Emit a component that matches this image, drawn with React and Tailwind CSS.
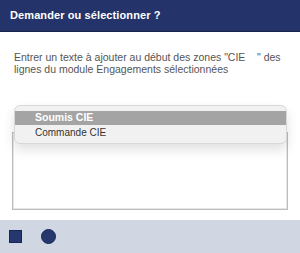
export default function App() {
  return (
    <div className="w-[300px] h-[253px] flex flex-col bg-white overflow-hidden" style={{ fontFamily: '"Liberation Sans", Arial, sans-serif' }}>
      <div className="h-[32px] shrink-0 bg-[#24346a] border-b border-[#18234a] flex items-center px-[10px]">
        <span className="text-white font-bold text-[11px] tracking-[0.1px]">Demander ou sélectionner ?</span>
      </div>
      <div className="flex-1 flex flex-col px-[12px]">
        <p className="mt-[19px] pl-[2px] text-[10.5px] leading-[12px] text-[#555555]">
          Entrer un texte à ajouter au début des zones "CIE&nbsp;&nbsp;&nbsp;&nbsp;" des lignes du module Engagements sélectionnées
        </p>
        <div className="relative mt-[57px]">
          <div className="h-[78px] w-[276px] border border-[#bdbdbd] bg-white shadow-[inset_0_0_0_1px_#e6e6e6]"></div>
          <div className="absolute left-[2px] top-[-27px] w-[273px] rounded-[6px] bg-[#f1f1f1] border border-[#d8d8d8] pt-[5px] pb-[4px] shadow-[0_6px_12px_rgba(0,0,0,0.12)]">
            <div className="h-[14px] bg-[#a4a4a4] flex items-center pl-[20px] text-white text-[10.5px] font-semibold">Soumis CIE</div>
            <div className="h-[14px] flex items-center pl-[20px] text-[#333333] text-[10px]">Commande CIE</div>
          </div>
        </div>
      </div>
      <div className="h-[33px] shrink-0 bg-[#d1d6e3] flex items-center pl-[9px] gap-[19px]">
        <div className="w-[13px] h-[13px] bg-[#24386e] border border-[#17265a]"></div>
        <div className="w-[15px] h-[15px] rounded-full bg-[#24386e] border border-[#17265a]"></div>
      </div>
    </div>
  );
}
